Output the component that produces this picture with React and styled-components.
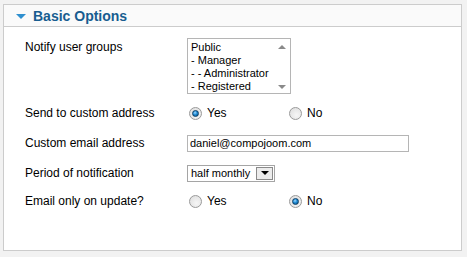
import React from 'react';
import styled, { createGlobalStyle } from 'styled-components';

const GlobalStyle = createGlobalStyle`
  html, body {
    margin: 0;
    padding: 0;
    background: #f2f2f2;
  }
  body {
    font-family: "Liberation Sans", Arial, sans-serif;
    font-size: 12px;
    color: #000;
  }
`;

const Page = styled.div`
  width: 467px;
  height: 257px;
  padding: 4px 0 0 3px;
  box-sizing: border-box;
`;

const Panel = styled.div`
  width: 459px;
  height: 247px;
  box-sizing: border-box;
  border: 1px solid #cccccc;
  background: #fff;
`;

const PanelHeader = styled.div`
  height: 22px;
  box-sizing: border-box;
  display: flex;
  align-items: center;
  gap: 7px;
  padding-left: 12px;
  background: #fafafa;
  border-bottom: 1px solid #cccccc;
`;

const Arrow = styled.span`
  width: 0;
  height: 0;
  border-left: 5px solid transparent;
  border-right: 5px solid transparent;
  border-top: 5px solid #2f8fcf;
  margin-top: 1px;
`;

const Title = styled.h3`
  margin: 0;
  font-size: 14px;
  font-weight: bold;
  color: #185d90;
`;

const Body = styled.div`
  padding: 11px 0 0 21px;
  display: flex;
  flex-direction: column;
`;

const Row = styled.div`
  display: grid;
  grid-template-columns: 162px auto;
  align-items: ${({ $top }) => ($top ? 'start' : 'center')};
  height: ${({ $h }) => $h}px;
`;

const Label = styled.label`
  line-height: 14px;
  padding-top: ${({ $top }) => ($top ? '2px' : '0')};
`;

const ListBox = styled.div`
  width: 104px;
  height: 56px;
  box-sizing: border-box;
  border: 1px solid #b5b5b5;
  display: flex;
  background: #fff;
`;

const Options = styled.ul`
  list-style: none;
  margin: 0;
  padding: 2px 0 0 3px;
  flex: 1;
  font-size: 11px;
  line-height: 13px;
`;

const ScrollBar = styled.div`
  width: 17px;
  display: flex;
  flex-direction: column;
  justify-content: space-between;
  align-items: center;
  padding: 6px 0 4px;
`;

const ScrollArrow = styled.span`
  width: 0;
  height: 0;
  border-left: 4px solid transparent;
  border-right: 4px solid transparent;
  ${({ $down }) =>
    $down ? 'border-top: 4px solid #8a8a8a;' : 'border-bottom: 4px solid #8a8a8a;'}
`;

const RadioGroup = styled.div`
  display: flex;
  align-items: center;
`;

const RadioOption = styled.label`
  display: flex;
  align-items: center;
  gap: 5px;
  width: ${({ $w }) => $w}px;
  font-size: 12px;
  padding-left: 2px;
`;

const Radio = styled.span`
  width: 13px;
  height: 13px;
  box-sizing: border-box;
  border-radius: 50%;
  border: 1px solid #9a9a9a;
  background: radial-gradient(circle at 60% 65%, #f6f6f6 0%, #dcdcdc 100%);
  display: flex;
  align-items: center;
  justify-content: center;

  &::after {
    content: '';
    display: ${({ $checked }) => ($checked ? 'block' : 'none')};
    width: 7px;
    height: 7px;
    border-radius: 50%;
    box-sizing: border-box;
    border: 1px solid #0c3f66;
    background: radial-gradient(circle at 40% 35%, #9fd8ff 0%, #1d8ad4 45%, #0a4c80 100%);
  }
`;

const TextInput = styled.div`
  width: 222px;
  height: 17px;
  box-sizing: border-box;
  border: 1px solid #b5b5b5;
  font-size: 11px;
  line-height: 15px;
  padding-left: 2px;
`;

const Select = styled.div`
  width: 88px;
  height: 17px;
  box-sizing: border-box;
  border: 1px solid #a5a5a5;
  display: flex;
  align-items: center;
  font-size: 11px;
  padding: 0 1px 0 3px;
`;

const SelectText = styled.span`
  flex: 1;
`;

const SelectButton = styled.span`
  width: 17px;
  height: 13px;
  box-sizing: border-box;
  border: 1px solid #8a8a8a;
  background: #ececec;
  display: flex;
  align-items: center;
  justify-content: center;

  &::after {
    content: '';
    border-left: 4px solid transparent;
    border-right: 4px solid transparent;
    border-top: 4px solid #000;
  }
`;

const YesNo = ({ value }) => (
  <RadioGroup>
    <RadioOption $w={98}>
      <Radio $checked={value === 'yes'} />
      Yes
    </RadioOption>
    <RadioOption>
      <Radio $checked={value === 'no'} />
      No
    </RadioOption>
  </RadioGroup>
);

export default function App() {
  return (
    <>
      <GlobalStyle />
      <Page>
        <Panel>
          <PanelHeader>
            <Arrow />
            <Title>Basic Options</Title>
          </PanelHeader>
          <Body>
            <Row $top $h={61}>
              <Label $top>Notify user groups</Label>
              <ListBox>
                <Options>
                  <li>Public</li>
                  <li>- Manager</li>
                  <li>- - Administrator</li>
                  <li>- Registered</li>
                </Options>
                <ScrollBar>
                  <ScrollArrow />
                  <ScrollArrow $down />
                </ScrollBar>
              </ListBox>
            </Row>
            <Row $h={28}>
              <Label>Send to custom address</Label>
              <YesNo value="yes" />
            </Row>
            <Row $h={32}>
              <Label>Custom email address</Label>
              <TextInput>daniel@compojoom.com</TextInput>
            </Row>
            <Row $h={28}>
              <Label>Period of notification</Label>
              <Select>
                <SelectText>half monthly</SelectText>
                <SelectButton />
              </Select>
            </Row>
            <Row $h={28}>
              <Label>Email only on update?</Label>
              <YesNo value="no" />
            </Row>
          </Body>
        </Panel>
      </Page>
    </>
  );
}
